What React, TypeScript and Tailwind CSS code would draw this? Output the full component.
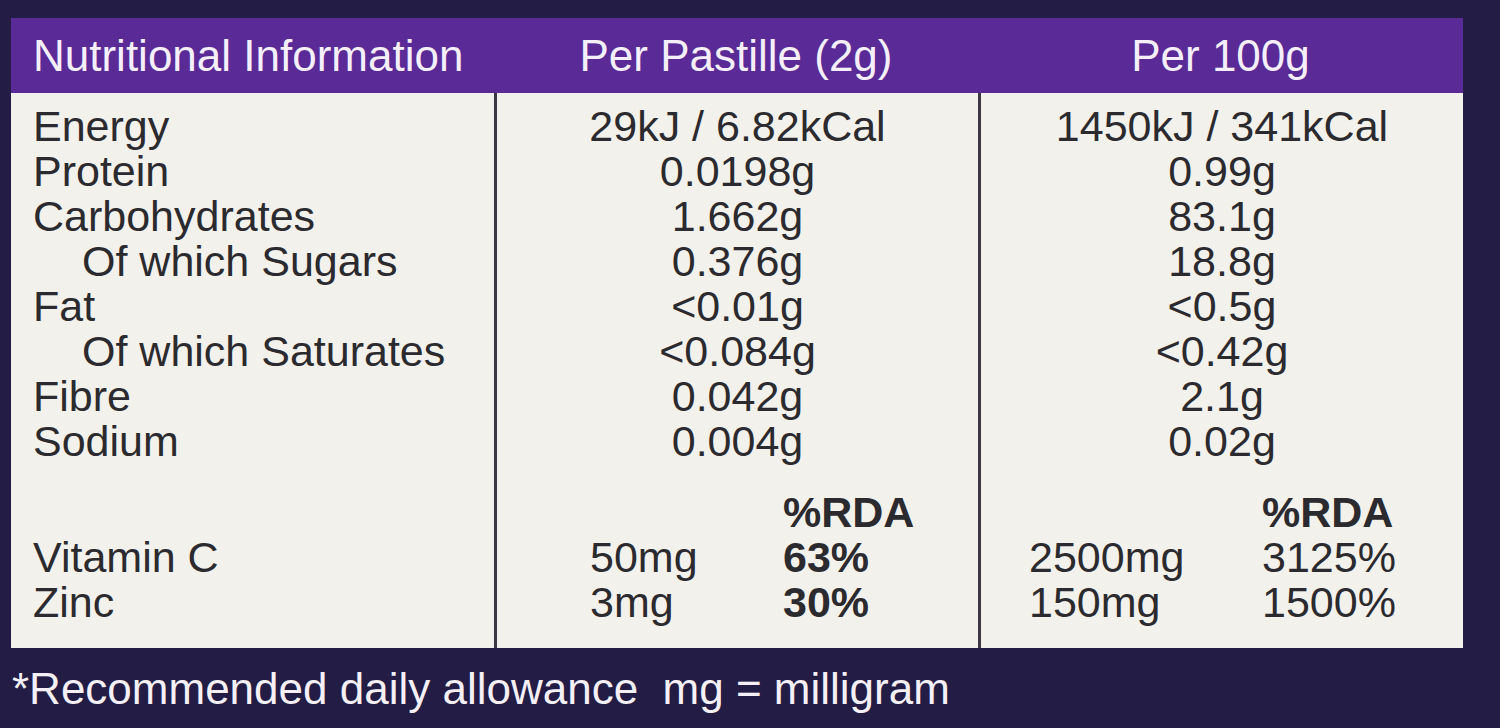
// Nutrition facts panel

type Row = {
  label: string;
  indent?: boolean;
  perPastille: string;
  per100: string;
};

const rows: Row[] = [
  { label: "Energy", perPastille: "29kJ / 6.82kCal", per100: "1450kJ / 341kCal" },
  { label: "Protein", perPastille: "0.0198g", per100: "0.99g" },
  { label: "Carbohydrates", perPastille: "1.662g", per100: "83.1g" },
  { label: "Of which Sugars", indent: true, perPastille: "0.376g", per100: "18.8g" },
  { label: "Fat", perPastille: "<0.01g", per100: "<0.5g" },
  { label: "Of which Saturates", indent: true, perPastille: "<0.084g", per100: "<0.42g" },
  { label: "Fibre", perPastille: "0.042g", per100: "2.1g" },
  { label: "Sodium", perPastille: "0.004g", per100: "0.02g" },
];

const minerals = [
  { label: "Vitamin C", pastille: "50mg", pastilleRda: "63%", hundred: "2500mg", hundredRda: "3125%" },
  { label: "Zinc", pastille: "3mg", pastilleRda: "30%", hundred: "150mg", hundredRda: "1500%" },
];

const App = () => {
  return (
    <div className="w-[1500px] h-[728px] overflow-hidden bg-[#231c44] pt-[18px] pl-[11px] font-['Liberation_Sans',Arial,sans-serif]">
      <div className="w-[1452px]">
        {/* header band */}
        <div className="grid grid-cols-[483px_484px_1fr] h-[75px] items-center bg-[#5a2a96] text-[44px] leading-none text-[#f4effa]">
          <div className="pl-[22px]">Nutritional Information</div>
          <div className="text-center">Per Pastille (2g)</div>
          <div className="text-center">Per 100g</div>
        </div>

        {/* body */}
        <div className="grid grid-cols-[483px_484px_1fr] h-[555px] bg-[#f3f1ec] text-[43px] leading-[45px] text-[#2b2a2e]">
          <div className="pt-[11px] pl-[22px]">
            {rows.map((r) => (
              <div key={r.label} className={r.indent ? "pl-[49px]" : ""}>
                {r.label}
              </div>
            ))}
            <div className="mt-[26px] h-[45px]" />
            {minerals.map((m) => (
              <div key={m.label}>{m.label}</div>
            ))}
          </div>

          <div className="pt-[11px] border-l-[3px] border-[#3c3743]">
            {rows.map((r) => (
              <div key={r.label} className="text-center">
                {r.perPastille}
              </div>
            ))}
            <div className="mt-[26px] pl-[286px] font-bold">%RDA</div>
            {minerals.map((m) => (
              <div key={m.label} className="flex pl-[93px]">
                <span className="w-[193px]">{m.pastille}</span>
                <span className="font-bold">{m.pastilleRda}</span>
              </div>
            ))}
          </div>

          <div className="pt-[11px] border-l-[3px] border-[#3c3743]">
            {rows.map((r) => (
              <div key={r.label} className="text-center">
                {r.per100}
              </div>
            ))}
            <div className="mt-[26px] pl-[281px] font-bold">%RDA</div>
            {minerals.map((m) => (
              <div key={m.label} className="flex pl-[48px]">
                <span className="w-[233px]">{m.hundred}</span>
                <span>{m.hundredRda}</span>
              </div>
            ))}
          </div>
        </div>
      </div>

      <p className="mt-[19px] pl-[1px] text-[44px] leading-[44px] text-[#f4f0f6] whitespace-pre">
        *Recommended daily allowance  mg = milligram
      </p>
    </div>
  );
};

export default App;
